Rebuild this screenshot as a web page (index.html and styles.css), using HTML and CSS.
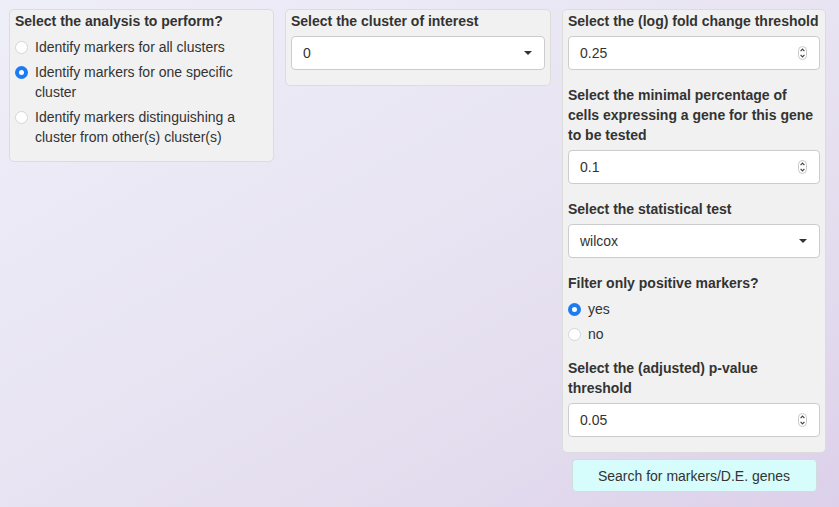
FILE: index.html
```html
<!DOCTYPE html>
<html>
<head>
<meta charset="utf-8">
<link rel="stylesheet" href="styles.css">
</head>
<body>
<div class="grid">
  <div class="col col1">
    <div class="well">
      <div class="group radios">
        <div class="label">Select the analysis to perform?</div>
        <div class="radio"><span class="dot"></span><span class="rtext">Identify markers for all clusters</span></div>
        <div class="radio"><span class="dot on"></span><span class="rtext">Identify markers for one specific cluster</span></div>
        <div class="radio"><span class="dot"></span><span class="rtext">Identify markers distinguishing a cluster from other(s) cluster(s)</span></div>
      </div>
    </div>
  </div>
  <div class="col col2">
    <div class="well">
      <div class="group">
        <div class="label">Select the cluster of interest</div>
        <div class="field"><span>0</span><span class="caret"></span></div>
      </div>
    </div>
  </div>
  <div class="col col3">
    <div class="well">
      <div class="group">
        <div class="label">Select the (log) fold change threshold</div>
        <div class="field"><span>0.25</span>
          <svg class="spin" width="9" height="14" viewBox="0 0 9 14"><rect x="0.5" y="0.5" width="8" height="13" rx="4" fill="#fff" stroke="#c8c8c8"/><path d="M2.6 5.2 L4.5 3.2 L6.4 5.2" fill="none" stroke="#444" stroke-width="1.2"/><path d="M2.6 8.8 L4.5 10.8 L6.4 8.8" fill="none" stroke="#444" stroke-width="1.2"/></svg>
        </div>
      </div>
      <div class="group">
        <div class="label">Select the minimal percentage of cells expressing a gene for this gene to be tested</div>
        <div class="field"><span>0.1</span>
          <svg class="spin" width="9" height="14" viewBox="0 0 9 14"><rect x="0.5" y="0.5" width="8" height="13" rx="4" fill="#fff" stroke="#c8c8c8"/><path d="M2.6 5.2 L4.5 3.2 L6.4 5.2" fill="none" stroke="#444" stroke-width="1.2"/><path d="M2.6 8.8 L4.5 10.8 L6.4 8.8" fill="none" stroke="#444" stroke-width="1.2"/></svg>
        </div>
      </div>
      <div class="group">
        <div class="label">Select the statistical test</div>
        <div class="field"><span>wilcox</span><span class="caret"></span></div>
      </div>
      <div class="group radios">
        <div class="label">Filter only positive markers?</div>
        <div class="radio"><span class="dot on"></span><span class="rtext">yes</span></div>
        <div class="radio"><span class="dot"></span><span class="rtext">no</span></div>
      </div>
      <div class="group">
        <div class="label">Select the (adjusted) p-value threshold</div>
        <div class="field"><span>0.05</span>
          <svg class="spin" width="9" height="14" viewBox="0 0 9 14"><rect x="0.5" y="0.5" width="8" height="13" rx="4" fill="#fff" stroke="#c8c8c8"/><path d="M2.6 5.2 L4.5 3.2 L6.4 5.2" fill="none" stroke="#444" stroke-width="1.2"/><path d="M2.6 8.8 L4.5 10.8 L6.4 8.8" fill="none" stroke="#444" stroke-width="1.2"/></svg>
        </div>
      </div>
    </div>
    <div class="btnrow"><button class="btn">Search for markers/D.E. genes</button></div>
  </div>
</div>
</body>
</html>
```
FILE: styles.css
```css
html, body {
  margin: 0;
  height: 100%;
}
body {
  background: linear-gradient(150deg, #eeeef8 0%, #e9e5f3 45%, #e3dcee 75%, #dcd0ea 100%);
  font-family: "Liberation Sans", Arial, sans-serif;
  font-size: 14px;
  line-height: 20px;
  color: #333;
}
.grid {
  display: grid;
  grid-template-columns: 265px 266px 264px;
  column-gap: 11px;
  padding: 9px 0 0 9px;
  align-items: start;
}
.well {
  background: #f1f1f1;
  border: 1px solid #dcdcdc;
  border-radius: 5px;
  padding: 1px 5px 0 5px;
}
.group {
  margin-bottom: 15px;
}
.group.radios {
  margin-bottom: 14px;
}
.label {
  font-weight: bold;
  margin-bottom: 5px;
}
.label + .radio {
  margin-top: 6px;
}
.radio {
  display: flex;
  align-items: flex-start;
  margin-bottom: 5px;
}
.radio:last-child {
  margin-bottom: 0;
}
.dot {
  flex: none;
  width: 11px;
  height: 11px;
  margin: 4px 7px 0 0;
  border-radius: 50%;
  background: #fff;
  border: 1px solid #d6d6d6;
  box-sizing: content-box;
}
.dot.on {
  width: 5px;
  height: 5px;
  border: 4px solid #1a7cf5;
  background: #fff;
}
.field {
  height: 32px;
  border: 1px solid #cccccc;
  border-radius: 4px;
  background: #fff;
  display: flex;
  align-items: center;
  justify-content: space-between;
  padding: 0 12px 0 11px;
}
.caret {
  width: 0;
  height: 0;
  border-left: 4px solid transparent;
  border-right: 4px solid transparent;
  border-top: 4px solid #333;
}
.spin {
  display: block;
}
.btnrow {
  display: flex;
  justify-content: center;
  margin-top: 6px;
}
.btn {
  width: 245px;
  height: 33px;
  background: #d6fcfc;
  border: 1px solid #cfdddd;
  border-radius: 4px;
  font-family: "Liberation Sans", Arial, sans-serif;
  font-size: 14px;
  color: #333;
  padding: 0;
}
```
